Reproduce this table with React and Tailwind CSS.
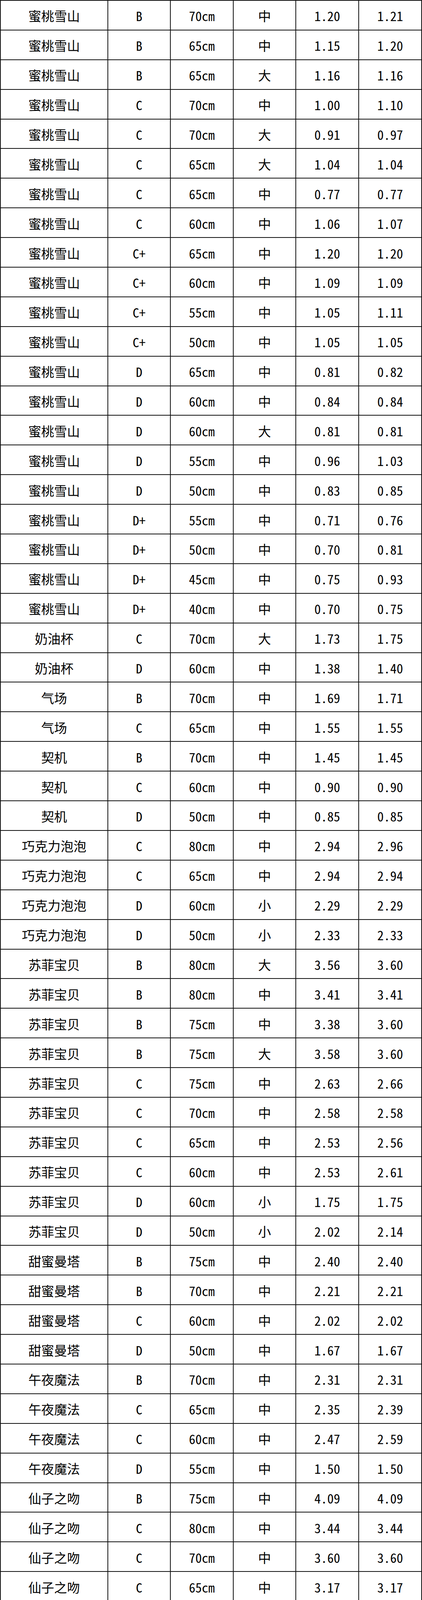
const rows = `蜜桃雪山 B 70cm 中 1.20 1.21
蜜桃雪山 B 65cm 中 1.15 1.20
蜜桃雪山 B 65cm 大 1.16 1.16
蜜桃雪山 C 70cm 中 1.00 1.10
蜜桃雪山 C 70cm 大 0.91 0.97
蜜桃雪山 C 65cm 大 1.04 1.04
蜜桃雪山 C 65cm 中 0.77 0.77
蜜桃雪山 C 60cm 中 1.06 1.07
蜜桃雪山 C+ 65cm 中 1.20 1.20
蜜桃雪山 C+ 60cm 中 1.09 1.09
蜜桃雪山 C+ 55cm 中 1.05 1.11
蜜桃雪山 C+ 50cm 中 1.05 1.05
蜜桃雪山 D 65cm 中 0.81 0.82
蜜桃雪山 D 60cm 中 0.84 0.84
蜜桃雪山 D 60cm 大 0.81 0.81
蜜桃雪山 D 55cm 中 0.96 1.03
蜜桃雪山 D 50cm 中 0.83 0.85
蜜桃雪山 D+ 55cm 中 0.71 0.76
蜜桃雪山 D+ 50cm 中 0.70 0.81
蜜桃雪山 D+ 45cm 中 0.75 0.93
蜜桃雪山 D+ 40cm 中 0.70 0.75
奶油杯 C 70cm 大 1.73 1.75
奶油杯 D 60cm 中 1.38 1.40
气场 B 70cm 中 1.69 1.71
气场 C 65cm 中 1.55 1.55
契机 B 70cm 中 1.45 1.45
契机 C 60cm 中 0.90 0.90
契机 D 50cm 中 0.85 0.85
巧克力泡泡 C 80cm 中 2.94 2.96
巧克力泡泡 C 65cm 中 2.94 2.94
巧克力泡泡 D 60cm 小 2.29 2.29
巧克力泡泡 D 50cm 小 2.33 2.33
苏菲宝贝 B 80cm 大 3.56 3.60
苏菲宝贝 B 80cm 中 3.41 3.41
苏菲宝贝 B 75cm 中 3.38 3.60
苏菲宝贝 B 75cm 大 3.58 3.60
苏菲宝贝 C 75cm 中 2.63 2.66
苏菲宝贝 C 70cm 中 2.58 2.58
苏菲宝贝 C 65cm 中 2.53 2.56
苏菲宝贝 C 60cm 中 2.53 2.61
苏菲宝贝 D 60cm 小 1.75 1.75
苏菲宝贝 D 50cm 小 2.02 2.14
甜蜜曼塔 B 75cm 中 2.40 2.40
甜蜜曼塔 B 70cm 中 2.21 2.21
甜蜜曼塔 C 60cm 中 2.02 2.02
甜蜜曼塔 D 50cm 中 1.67 1.67
午夜魔法 B 70cm 中 2.31 2.31
午夜魔法 C 65cm 中 2.35 2.39
午夜魔法 C 60cm 中 2.47 2.59
午夜魔法 D 55cm 中 1.50 1.50
仙子之吻 B 75cm 中 4.09 4.09
仙子之吻 C 80cm 中 3.44 3.44
仙子之吻 C 70cm 中 3.60 3.60
仙子之吻 C 65cm 中 3.17 3.17
仙子之吻 C 60cm 中 3.44 3.51
仙子之吻 D 55cm 小 3.46 3.46
仙子之吻 D 55cm 小 3.03 3.08
香水女人 C 70cm 中 1.20 1.20
月光漫步 B 80cm 中 1.51 1.51
月光漫步 B 70cm 中 1.60 1.61
月光漫步 B+ 75cm 中 1.62 1.62
月光漫步 C 70cm 中 1.26 1.31
月光漫步 C 65cm 中 1.21 1.21
月光漫步 D 55cm 中 1.10 1.10
月光漫步 D+ 45cm 中 1.05 1.05
折射 A 85cm 中 2.67 2.71`
  .split('\n')
  .map((line) => line.split(' '));

export default function App() {
  return (
    <div className="bg-white w-[1080px]">
      <div
        className="flex flex-col border-t-2 border-l-2 border-[#111] text-black text-[33px] leading-none"
        style={{ fontFamily: '"Noto Sans Mono CJK SC", "DejaVu Sans Mono", "Noto Sans CJK SC", monospace' }}
      >
        {rows.map((r, i) => (
          <div key={i} className="grid grid-cols-[275px_160px_161px_160px_161px_161px] h-[75.9px] shrink-0">
            {r.map((cell, j) => (
              <div
                key={j}
                className="flex items-center justify-center border-r-2 border-b-2 border-[#111] pt-1 whitespace-nowrap"
              >
                {cell}
              </div>
            ))}
          </div>
        ))}
      </div>
    </div>
  );
}
